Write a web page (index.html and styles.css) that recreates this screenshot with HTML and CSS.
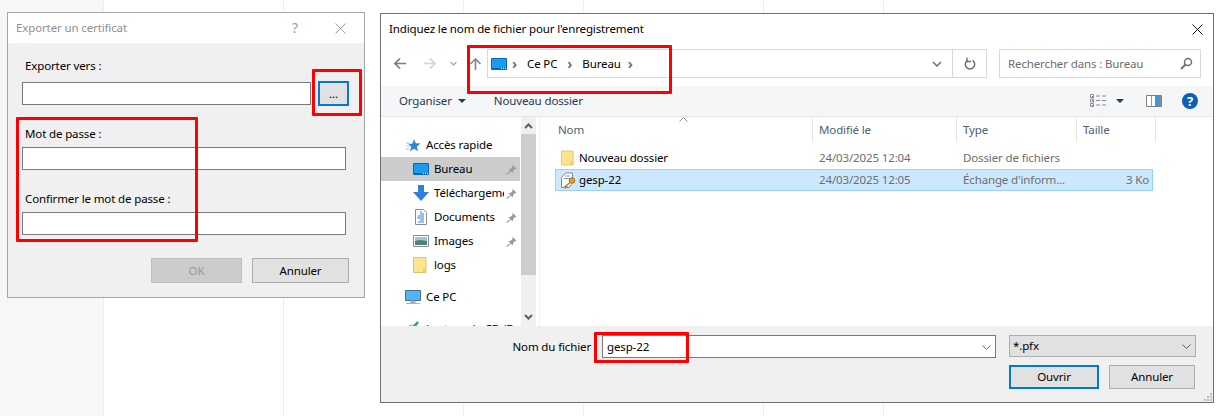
FILE: index.html
```html
<!DOCTYPE html>
<html lang="fr">
<head>
  <meta charset="UTF-8">
  <title>Exporter un certificat</title>
  <link rel="stylesheet" href="styles.css">
</head>
<body>
  <svg class="defs" width="0" height="0">
    <symbol id="folder" viewBox="0 0 14 16">
      <path d="M.5.5h12.500v15H.5z" fill="#fde48f" stroke="#e5c365"/>
      <path d="M10 15.500v-4h3v4z" fill="#f2cf6d"/>
    </symbol>
    <symbol id="pin" viewBox="0 0 14 14">
      <path d="M8 .5l5.500 5.500-2 .5-2.500 2.500-.5 3-2.300-2.300-4.200 3.800-1.500.5.500-1.500L5.500 8.500 2.800 6.800l3.200-.8L8.500 3.500z" fill="#969ba1"/>
    </symbol>
    <symbol id="screen" viewBox="0 0 16 12">
      <path d="M.5.5h15v11H.5z" fill="#1a9bf0" stroke="#0a66b8"/>
      <path d="M1 10h14v1H1z" fill="#0a66b8"/>
      <path d="M10 10h1v1h-1zM12 10h1v1h-1zM14 10h1v1h-1z" fill="#fff"/>
    </symbol>
  </svg>

  <main class="desktop">
    <div class="stripe stripe-side"></div>
    <div class="stripe stripe-wide"></div>
    <div class="stripe stripe-wide"></div>
    <div class="stripe stripe-thin"></div>
    <div class="stripe stripe-wide"></div>
    <div class="stripe stripe-thin"></div>
  </main>

  <!-- petite fenetre -->
  <section class="window export-win">
    <header class="export-title">
      <span class="export-name">Exporter un certificat</span>
      <span class="export-help">?</span>
      <svg class="export-close" width="11" height="11" viewBox="0 0 11 11"><path d="M.5.5l10 10M10.500.5l-10 10" stroke="#9c9c9c" fill="none"/></svg>
    </header>
    <div class="export-body">
      <label class="field-label first">Exporter vers :</label>
      <div class="path-row">
        <div class="input input-path"></div>
        <button class="btn btn-default btn-browse">...</button>
      </div>
      <label class="field-label">Mot de passe :</label>
      <div class="input input-pass"></div>
      <label class="field-label confirm">Confirmer le mot de passe :</label>
      <div class="input input-pass"></div>
      <div class="export-actions">
        <button class="btn btn-disabled btn-ok">OK</button>
        <button class="btn btn-cancel">Annuler</button>
      </div>
    </div>
  </section>

  <!-- boite de dialogue enregistrement -->
  <section class="window save-win">
    <header class="save-title">
      <span>Indiquez le nom de fichier pour l'enregistrement</span>
      <svg width="11" height="11" viewBox="0 0 11 11"><path d="M.5.5l10 10M10.500.5l-10 10" stroke="#111" fill="none"/></svg>
    </header>

    <nav class="nav">
      <svg class="nav-back" width="12" height="11" viewBox="0 0 12 11"><path d="M6 .5l-5 5 5 5M1 5.500h11" stroke="#7d7d7d" stroke-width="1.700" fill="none"/></svg>
      <svg class="nav-next" width="12" height="11" viewBox="0 0 12 11"><path d="M6 .5l5 5-5 5M11 5.500H0" stroke="#d4d4d4" stroke-width="1.700" fill="none"/></svg>
      <svg class="nav-drop" width="7" height="5" viewBox="0 0 7 5"><path d="M.5 1l3 3 3-3" stroke="#a8a8a8" stroke-width="1.300" fill="none"/></svg>
      <svg class="nav-up" width="11" height="12" viewBox="0 0 11 12"><path d="M.5 6l5-5 5 5M5.500 1v11" stroke="#8a8a8a" stroke-width="1.700" fill="none"/></svg>
      <div class="address">
        <svg class="address-icon" width="16" height="12"><use href="#screen"/></svg>
        <span class="crumb-sep">›</span><span class="crumb">Ce PC</span>
        <span class="crumb-sep">›</span><span class="crumb crumb-last">Bureau</span>
        <span class="crumb-sep">›</span>
        <svg class="address-drop" width="10" height="6" viewBox="0 0 10 6"><path d="M1 1l4 4 4-4" stroke="#6f6f6f" stroke-width="1.500" fill="none"/></svg>
        <div class="address-refresh">
          <svg width="12" height="13" viewBox="0 0 12 13"><path d="M8.500 3.300A4.700 4.700 0 1 1 3.500 3.300" stroke="#6f6f6f" stroke-width="1.500" fill="none"/><path d="M3 .5v4h4" stroke="#6f6f6f" stroke-width="1.300" fill="none"/></svg>
        </div>
      </div>
      <div class="search">
        <span>Rechercher dans : Bureau</span>
        <svg width="13" height="13" viewBox="0 0 13 13"><circle cx="8" cy="5" r="3.500" stroke="#6f6f6f" stroke-width="1.500" fill="none"/><path d="M5.500 7.500L1 12" stroke="#6f6f6f" stroke-width="2"/></svg>
      </div>
    </nav>

    <div class="toolbar">
      <span class="tool tool-org">Organiser</span>
      <svg class="caret" width="8" height="4" viewBox="0 0 8 4"><path d="M0 0h8L4 4z" fill="#1e395b"/></svg>
      <span class="tool tool-new">Nouveau dossier</span>
      <svg class="tool-view" width="17" height="13" viewBox="0 0 17 13">
        <path d="M.5.500h3v3h-3zM.5 5h3v3h-3zM.5 9.500h3v3h-3z" fill="#fff" stroke="#8d8d8d"/>
        <path d="M2 2h1v1H2z" fill="#3a78c2"/><path d="M2 6h1v1H2zM2 11h1v1H2z" fill="#c25a5a"/>
        <path d="M6 2h4M12 2h4M6 6.500h4M12 6.500h4M6 11h4M12 11h4" stroke="#8d8d8d"/>
      </svg>
      <svg class="caret tool-view-caret" width="8" height="4" viewBox="0 0 8 4"><path d="M0 0h8L4 4z" fill="#1e395b"/></svg>
      <svg class="tool-pane" width="16" height="12" viewBox="0 0 16 12">
        <path d="M.5.500h15v11H.5z" fill="#fff" stroke="#7f7f7f"/>
        <path d="M5.500 1v10" stroke="#9a9a9a"/><path d="M9 1h5v10H9z" fill="#3d97e6"/><path d="M14 1h1v10h-1z" fill="#8f8f8f"/>
      </svg>
      <span class="tool-help">?</span>
    </div>

    <div class="browser">
      <aside class="tree">
        <div class="tree-row lvl-top">
          <svg width="16" height="15" viewBox="0 0 16 15"><path d="M9 1l1.700 4.200 4.800.3-3.700 3 1.200 4.800L9 10.700l-4 2.600 1.200-4.800-2.700-2.300 4-.7z" fill="#2a86dc"/><path d="M1 5h4M2 8h3M1 11h3" stroke="#8cc4f2"/></svg>
          <span class="tree-text">Accès rapide</span>
        </div>
        <div class="tree-row lvl-sub tree-active">
          <svg width="16" height="12"><use href="#screen"/></svg>
          <span class="tree-text">Bureau</span>
          <svg class="pin" width="11" height="11"><use href="#pin"/></svg>
        </div>
        <div class="tree-row lvl-sub">
          <svg width="16" height="16" viewBox="0 0 16 16"><path d="M5 0h6v7h5l-8 9-8-9h5z" fill="#2f80d8"/></svg>
          <span class="tree-text">Téléchargements</span>
          <svg class="pin" width="11" height="11"><use href="#pin"/></svg>
        </div>
        <div class="tree-row lvl-sub">
          <svg width="16" height="16" viewBox="0 0 16 16"><path d="M2.500.5h8l3 3v12h-11z" fill="#fff" stroke="#8a8a8a"/><path d="M7 3h2M7 5h4M5 7h6M4 9h7M7 11h4M5 13h6" stroke="#2f80d8"/></svg>
          <span class="tree-text">Documents</span>
          <svg class="pin" width="11" height="11"><use href="#pin"/></svg>
        </div>
        <div class="tree-row lvl-sub">
          <svg width="16" height="12" viewBox="0 0 16 12"><path d="M.5.500h15v11H.5z" fill="#fff" stroke="#8a8a8a"/><path d="M2 2h12v4H2z" fill="#9cc4e6"/><path d="M2 6l5-1 7 1v4H2z" fill="#55806f"/></svg>
          <span class="tree-text">Images</span>
          <svg class="pin" width="11" height="11"><use href="#pin"/></svg>
        </div>
        <div class="tree-row lvl-sub">
          <svg width="14" height="16"><use href="#folder"/></svg>
          <span class="tree-text tree-folder">logs</span>
        </div>
        <div class="tree-row lvl-root tree-group">
          <svg width="16" height="15" viewBox="0 0 16 15"><path d="M.5.500h15v10H.5z" fill="#4fb5f5" stroke="#4a6f8f"/><path d="M6 11h4v2H6zM1 13.500h14" fill="#9fb2c2" stroke="#9fb2c2"/></svg>
          <span class="tree-text">Ce PC</span>
        </div>
        <div class="tree-row lvl-root tree-group">
          <svg width="16" height="16" viewBox="0 0 16 16"><circle cx="8" cy="9" r="6" fill="#c9d2da"/><path d="M4 5l3 3 6-7" stroke="#2fa84f" stroke-width="2.500" fill="none"/></svg>
          <span class="tree-text">Lecteur de CD (D:)</span>
        </div>
      </aside>

      <div class="scrollbar">
        <svg class="scroll-arrow" width="9" height="6" viewBox="0 0 9 6"><path d="M1 5l3.500-3.500L8 5" stroke="#606060" stroke-width="2" fill="none"/></svg>
        <div class="scroll-thumb"></div>
        <svg class="scroll-arrow scroll-down" width="9" height="6" viewBox="0 0 9 6"><path d="M1 1l3.500 3.500L8 1" stroke="#606060" stroke-width="2" fill="none"/></svg>
      </div>

      <div class="files">
        <div class="files-head">
          <span class="col-head col-name">Nom</span>
          <span class="col-head">Modifié le</span>
          <span class="col-head">Type</span>
          <span class="col-head">Taille</span>
          <svg class="sort-mark" width="9" height="5" viewBox="0 0 9 5"><path d="M.5 4.500l4-4 4 4" stroke="#8a8a8a" fill="none"/></svg>
        </div>
        <div class="file-row">
          <span class="file-name">
            <svg class="file-folder" width="13" height="16"><use href="#folder"/></svg>
            Nouveau dossier
          </span>
          <span class="file-meta">24/03/2025 12:04</span>
          <span class="file-meta">Dossier de fichiers</span>
          <span class="file-meta file-size"></span>
        </div>
        <div class="file-row file-selected">
          <span class="file-name">
            <svg class="file-cert" width="16" height="17" viewBox="0 0 16 17">
              <path d="M1.500 5.500l4-4.500h7v9l-3 5.500h-8z" fill="#fff" stroke="#8a8a8a"/>
              <path d="M5 4h5M3.500 6.500h7" stroke="#7f9ac0"/>
              <circle cx="12" cy="8.500" r="2.800" fill="#e8a02c" stroke="#a8691a"/>
              <path d="M10 10.500l-6 5M6 14l1.500 1.500M4.500 15L6 16.500" stroke="#c07f22" stroke-width="1.500" fill="none"/>
            </svg>
            gesp-22
          </span>
          <span class="file-meta">24/03/2025 12:05</span>
          <span class="file-meta">Échange d'inform...</span>
          <span class="file-meta file-size">3 Ko</span>
        </div>
      </div>
    </div>

    <footer class="save-foot">
      <div class="name-row">
        <span class="name-label">Nom du fichier</span>
        <div class="input name-input">
          <span>gesp-22</span>
          <svg width="9" height="5" viewBox="0 0 9 5"><path d="M.5.500l4 4 4-4" stroke="#6f6f6f" fill="none"/></svg>
        </div>
        <div class="type-select">
          <span>*.pfx</span>
          <svg width="9" height="5" viewBox="0 0 9 5"><path d="M.5.500l4 4 4-4" stroke="#5a5a5a" fill="none"/></svg>
        </div>
      </div>
      <div class="save-actions">
        <button class="btn btn-default btn-open">Ouvrir</button>
        <button class="btn btn-close">Annuler</button>
      </div>
      <svg class="grip" width="9" height="9" viewBox="0 0 9 9"><path d="M6 0h2v2H6zM3 3h2v2H3zM6 3h2v2H6zM0 6h2v2H0zM3 6h2v2H3zM6 6h2v2H6z" fill="#bdbdbd"/></svg>
    </footer>
  </section>

  <!-- encadres rouges de l'annotation -->
  <div class="mark mark-browse"></div>
  <div class="mark mark-pass"></div>
  <div class="mark mark-address"></div>
  <div class="mark mark-name"></div>
</body>
</html>
```

FILE: styles.css
```css
* {
  box-sizing: border-box;
}

body {
  margin: 0;
  width: 1221px;
  height: 416px;
  overflow: hidden;
  position: relative;
  background: #fff;
  font-family: "Noto Sans", sans-serif;
  font-size: 11.5px;
  letter-spacing: -0.13px;
  line-height: 16px;
  color: #000;
}

.defs {
  position: absolute;
}

svg {
  flex: none;
  display: block;
}

/* fond */
.desktop {
  display: flex;
  height: 416px;
}

.stripe {
  border-right: 1px solid #e9eef4;
}

.stripe-side {
  width: 104px;
  background: #f7f7f7;
}

.stripe-wide {
  width: 180px;
}

.stripe-thin {
  width: 120px;
}

/* fenetres */
.window {
  position: absolute;
  display: flex;
  flex-direction: column;
}

.export-win {
  left: 7px;
  top: 12px;
  width: 358px;
  height: 286px;
  border: 1px solid #a6a6a6;
  background: #f0f0f0;
}

.save-win {
  left: 380px;
  top: 13px;
  width: 834px;
  height: 390px;
  border: 1px solid #707070;
  background: #fff;
}

.export-title {
  display: flex;
  align-items: center;
  height: 30px;
  padding-left: 8px;
  background: #fff;
  color: #8f8f8f;
}

.export-name {
  flex: 1;
}

.export-help {
  margin-right: 37px;
  font-size: 14px;
  color: #9c9c9c;
}

.export-close {
  margin-right: 18px;
}

.export-body {
  padding: 15px 15px 0 14px;
}

.field-label {
  display: block;
  margin: 20px 0 5px 3px;
}

.field-label.first {
  margin-top: 0;
  margin-bottom: 7px;
}

.field-label.confirm {
  margin-top: 21px;
}

.path-row {
  display: flex;
  align-items: center;
  gap: 7px;
}

.input {
  height: 23px;
  background: #fff;
  border: 1px solid #7a7a7a;
}

.input-path {
  width: 289px;
}

.input-pass {
  width: 324px;
}

.btn {
  height: 25px;
  padding: 0;
  font: inherit;
  letter-spacing: inherit;
  color: #000;
  background: #e1e1e1;
  border: 1px solid #adadad;
}

.btn-default {
  border: 2px solid #0078d7;
}

.btn-browse {
  width: 31px;
  line-height: 16px;
}

.btn-disabled {
  color: #9a9a9a;
  background: #cccccc;
  border-color: #bfbfbf;
}

.export-actions {
  display: flex;
  justify-content: flex-end;
  gap: 10px;
  margin-top: 23px;
}

.btn-ok {
  width: 91px;
}

.btn-cancel {
  width: 97px;
}

/* enregistrement */
.save-title {
  display: flex;
  justify-content: space-between;
  align-items: center;
  height: 30px;
  padding: 0 10px 0 8px;
}

.nav {
  display: flex;
  align-items: center;
  height: 42px;
  padding: 5px 12px 8px 13px;
}

.nav-back {
  margin-right: 18px;
}

.nav-next {
  margin-right: 14px;
}

.nav-drop {
  margin-right: 13px;
}

.nav-up {
  margin-right: 6px;
}

.address {
  display: flex;
  align-items: center;
  width: 500px;
  height: 29px;
  padding-left: 3px;
  border: 1px solid #d9d9d9;
  margin-right: 12px;
}

.address-icon {
  margin-right: 5px;
}

.crumb-sep {
  width: 9px;
  margin-right: 6px;
  color: #6f6f6f;
  font-size: 14px;
  font-weight: bold;
}

.crumb {
  margin-right: 10px;
}

.crumb-last {
  margin-right: 7px;
}

.address-drop {
  margin-left: auto;
  margin-right: 10px;
}

.address-refresh {
  display: flex;
  align-items: center;
  justify-content: center;
  width: 34px;
  height: 27px;
  border-left: 1px solid #d9d9d9;
}

.search {
  display: flex;
  align-items: center;
  justify-content: space-between;
  width: 202px;
  height: 29px;
  padding: 0 7px 0 8px;
  border: 1px solid #d9d9d9;
  color: #6d6d6d;
}

.toolbar {
  display: flex;
  align-items: center;
  height: 31px;
  padding-bottom: 1px;
  background: #f5f6f7;
  border-bottom: 1px solid #e5e5e5;
  color: #1e395b;
}

.tool-org {
  margin-left: 18px;
}

.caret {
  margin-left: 6px;
}

.tool-new {
  margin-left: 28px;
}

.tool-view {
  margin-left: auto;
}

.tool-view-caret {
  margin-left: 9px;
}

.tool-pane {
  margin-left: 22px;
}

.tool-help {
  width: 16px;
  height: 16px;
  margin: 0 15px 0 20px;
  border-radius: 50%;
  background: #0a62b8;
  color: #fff;
  font-weight: bold;
  font-size: 13px;
  line-height: 16px;
  text-align: center;
}

.browser {
  display: flex;
  height: 209px;
  overflow: hidden;
}

.tree {
  width: 140px;
  padding: 16px 1px 0 0;
  overflow: hidden;
}

.tree-row {
  display: flex;
  align-items: center;
  height: 24px;
  padding-right: 3px;
}

.tree-group {
  margin-top: 8px;
}

.lvl-top {
  padding-left: 24px;
}

.lvl-sub {
  padding-left: 32px;
}

.lvl-root {
  padding-left: 24px;
}

.tree-active {
  background: #cccccc;
}

.tree-text {
  flex: 1;
  margin-left: 5px;
  overflow: hidden;
  white-space: nowrap;
}

.tree-folder {
  margin-left: 7px;
}

.pin {
  margin-left: 2px;
  margin-right: 0;
}

.scrollbar {
  display: flex;
  flex-direction: column;
  align-items: center;
  width: 15px;
  background: #f0f0f0;
}

.scroll-arrow {
  margin: 6px 0 5px;
}

.scroll-down {
  margin: auto 0 6px;
}

.scroll-thumb {
  width: 15px;
  height: 141px;
  background: #cdcdcd;
}

.files {
  flex: 1;
  margin-left: 3px;
  border-left: 1px solid #f0f0f0;
}

.files-head {
  position: relative;
  display: grid;
  grid-template-columns: 273px 144px 120px 79px;
  height: 25px;
  margin-bottom: 5px;
}

.col-head {
  padding: 5px 0 0 6px;
  border-right: 1px solid #e5e5e5;
  color: #4c607a;
}

.col-name {
  padding-left: 18px;
}

.sort-mark {
  position: absolute;
  left: 139px;
  top: 0;
}

.file-row {
  display: grid;
  grid-template-columns: 258px 144px 120px 74px;
  align-items: center;
  width: 598px;
  height: 22px;
  margin-left: 15px;
  border: 1px solid transparent;
}

.file-selected {
  background: #cce8ff;
  border-color: #99d1ff;
}

.file-name {
  display: flex;
  align-items: center;
  gap: 6px;
  padding-left: 4px;
}

.file-folder {
  margin-left: 1px;
  margin-right: -1px;
}

.file-cert {
  margin-right: -3px;
}

.file-meta {
  padding-left: 5px;
  color: #6d6d6d;
  white-space: nowrap;
}

.file-size {
  padding-right: 3px;
  text-align: right;
}

.save-foot {
  position: relative;
  flex: 1;
  padding-top: 9px;
  background: #f0f0f0;
}

.name-row {
  display: flex;
  align-items: flex-start;
  justify-content: flex-end;
  padding-right: 17px;
}

.name-label {
  margin-top: 4px;
  margin-right: 11px;
}

.name-input {
  display: flex;
  align-items: center;
  justify-content: space-between;
  width: 394px;
  padding: 1px 4px 0;
  margin-right: 13px;
}

.type-select {
  display: flex;
  align-items: center;
  justify-content: space-between;
  width: 187px;
  height: 22px;
  padding: 0 4px 0 3px;
  background: #e1e1e1;
  border: 1px solid #adadad;
}

.save-actions {
  display: flex;
  justify-content: flex-end;
  gap: 10px;
  margin-top: 7px;
  padding-right: 18px;
}

.save-actions .btn {
  height: 24px;
}

.btn-open {
  width: 90px;
}

.btn-close {
  width: 86px;
}

.grip {
  position: absolute;
  right: 0;
  bottom: 0;
}

/* annotations */
.mark {
  position: absolute;
  border: 3px solid #ff0000;
  border-radius: 1px;
}

.mark-browse {
  left: 312px;
  top: 69px;
  width: 50px;
  height: 47px;
}

.mark-pass {
  left: 16px;
  top: 117px;
  width: 182px;
  height: 125px;
}

.mark-address {
  left: 467px;
  top: 45px;
  width: 205px;
  height: 49px;
}

.mark-name {
  left: 594px;
  top: 332px;
  width: 95px;
  height: 31px;
}
```
